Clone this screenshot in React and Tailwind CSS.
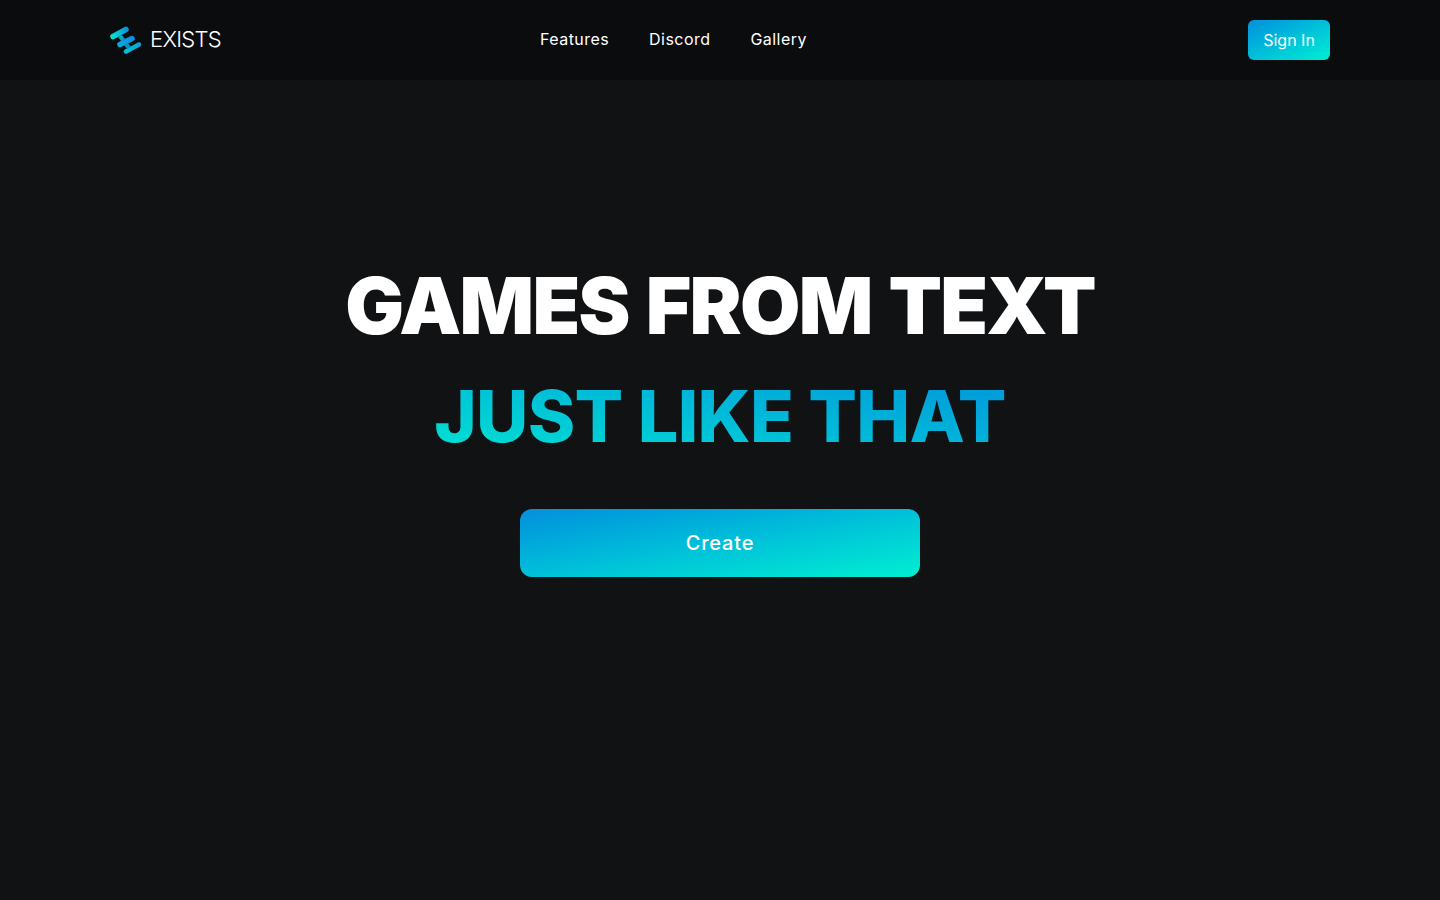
const sans = "font-['Inter','Liberation_Sans',sans-serif]";

function Logo() {
  return (
    <svg width="34" height="30" viewBox="0 0 34 30" fill="none" className="shrink-0">
      <defs>
        <linearGradient id="a" x1="2" y1="13" x2="18" y2="3" gradientUnits="userSpaceOnUse">
          <stop offset="0" stopColor="#00e6cf" />
          <stop offset="1" stopColor="#0a8fdc" />
        </linearGradient>
        <linearGradient id="b" x1="9" y1="21" x2="24" y2="13" gradientUnits="userSpaceOnUse">
          <stop offset="0" stopColor="#0aa8dc" />
          <stop offset="1" stopColor="#0a8fdc" />
        </linearGradient>
        <linearGradient id="c" x1="14" y1="29" x2="32" y2="19" gradientUnits="userSpaceOnUse">
          <stop offset="0" stopColor="#00c8d8" />
          <stop offset="1" stopColor="#0a9fdc" />
        </linearGradient>
      </defs>
      <path d="M3 11.500 L16 4.500" stroke="url(#a)" strokeWidth="5.500" strokeLinecap="round" />
      <path d="M10 19.500 L22 13.500" stroke="url(#b)" strokeWidth="5.500" strokeLinecap="round" />
      <path d="M16 26.500 L29 19.500" stroke="url(#c)" strokeWidth="4.500" strokeLinecap="round" />
      <path d="M8 12 L11 16 L15 14 L12 10 Z" fill="#0a9fc8" />
      <path d="M14 20 L17 24 L21 22 L18 18 Z" fill="#0a8fb8" />
    </svg>
  );
}

export default function App() {
  return (
    <div className={`min-h-[900px] bg-[#101214] text-white ${sans}`}>
      <header className="h-20 bg-[#0b0c0e] px-[110px] flex items-center">
        <div className="flex items-center gap-[6px] w-[430px]">
          <Logo />
          <span className="text-[22px] font-light tracking-[-0.7px] -translate-y-px">EXISTS</span>
        </div>
        <nav className="flex items-center gap-10 text-[16px] tracking-[0.45px] -translate-y-px">
          <a>Features</a>
          <a>Discord</a>
          <a>Gallery</a>
        </nav>
        <button className="ml-auto h-10 w-[82px] rounded-md text-[16px] bg-linear-to-br from-[#0a8fdc] to-[#00efd1]">Sign In</button>
      </header>
      <main className="flex flex-col items-center pt-[172px]">
        <h1 className="text-[78px] leading-[108px] font-black tracking-[-1.7px] [word-spacing:3px]">GAMES FROM TEXT</h1>
        <h2 className="text-[72px] leading-[108px] mt-0.5 font-extrabold tracking-[-0.7px] text-transparent bg-clip-text bg-linear-to-tr from-[#00e8d0] to-[#0a8fdc]">JUST LIKE THAT</h2>
        <button className="mt-[39px] w-[400px] h-[68px] rounded-xl text-[20px] font-medium tracking-[0.8px] bg-linear-to-br from-[#0a8fdc] to-[#00efd1]">Create</button>
      </main>
    </div>
  );
}
